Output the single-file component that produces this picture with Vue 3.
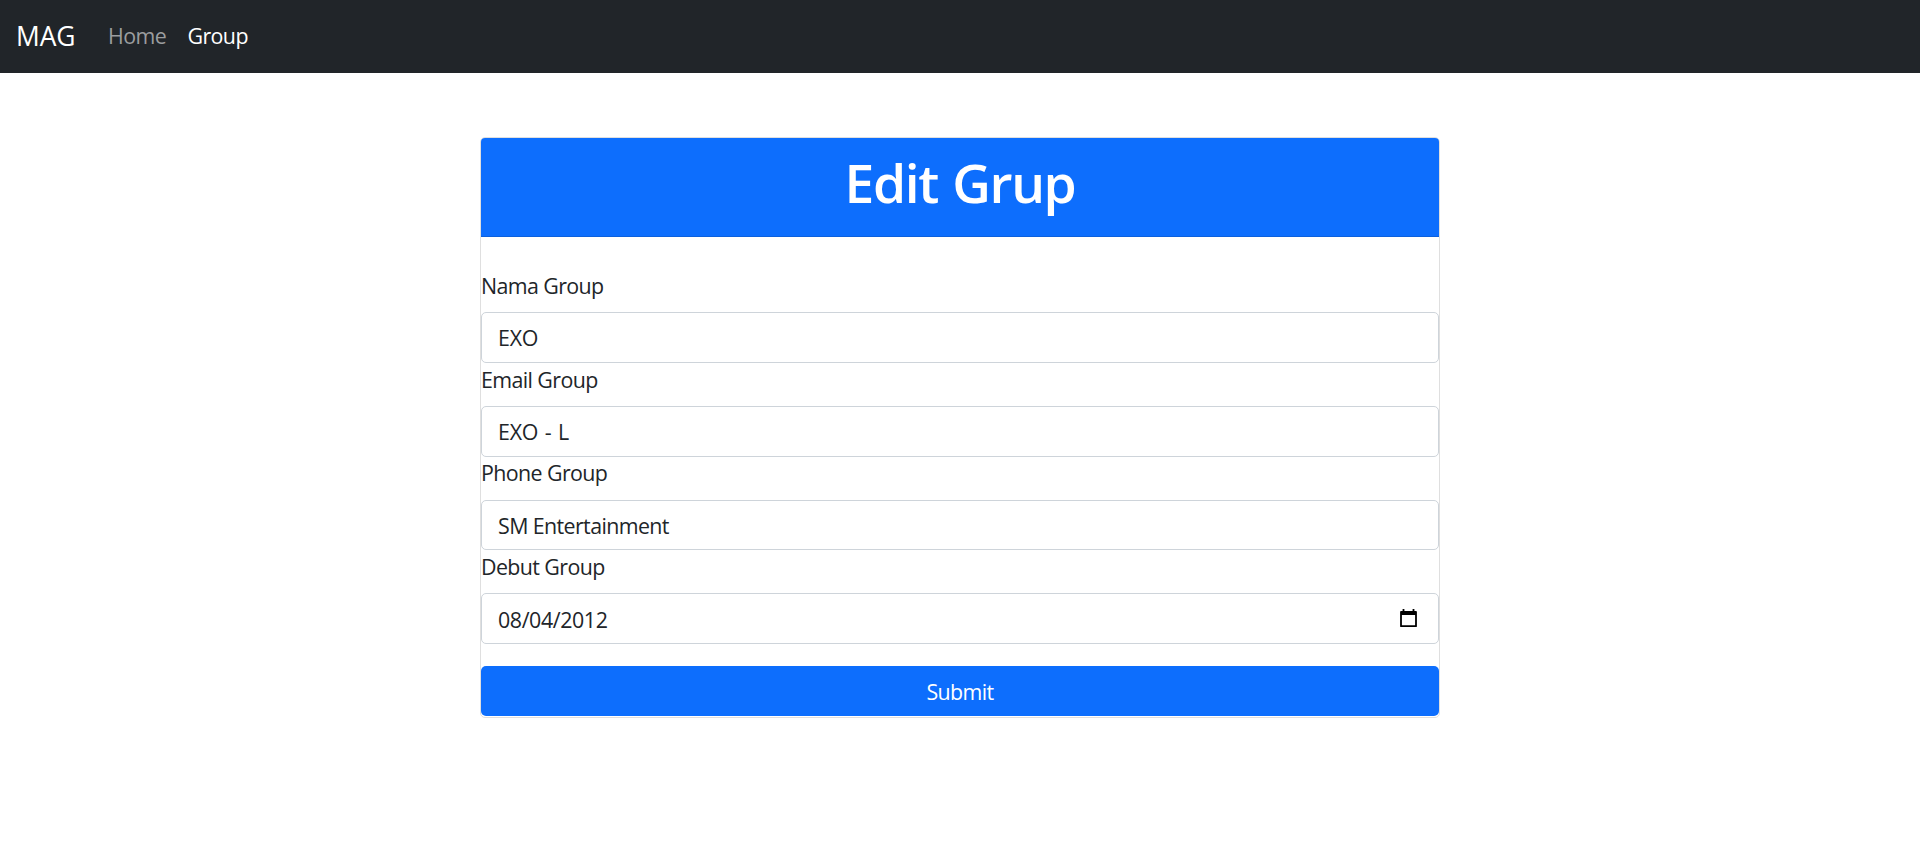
<script setup>
import { ref } from 'vue'

const fields = ref([
  { id: 'nama', label: 'Nama Group', value: 'EXO' },
  { id: 'email', label: 'Email Group', value: 'EXO - L' },
  { id: 'phone', label: 'Phone Group', value: 'SM Entertainment' },
  { id: 'debut', label: 'Debut Group', value: '08/04/2012', date: true },
])
</script>

<template>
  <nav class="navbar">
    <a class="brand">MAG</a>
    <a class="link home">Home</a>
    <a class="link active">Group</a>
  </nav>
  <main class="card">
    <header class="card-header"><h1>Edit Grup</h1></header>
    <form @submit.prevent>
      <div v-for="f in fields" :key="f.id" class="field">
        <label :for="f.id" :class="f.id">{{ f.label }}</label>
        <div class="control">
          <input :id="f.id" v-model="f.value" :class="f.id" type="text" spellcheck="false" />
          <svg v-if="f.date" class="calendar" width="17" height="19" viewBox="0 0 17 19">
            <path d="M1 3h15v14.2H1z" fill="none" stroke="#000" stroke-width="1.8" stroke-linejoin="round" />
            <path d="M1 2h15v4H1zM2.6 0h1.8v3H2.6zM12.6 0h1.8v3h-1.8z" fill="#000" />
          </svg>
        </div>
      </div>
      <button type="submit">Submit</button>
    </form>
  </main>
</template>

<style>
body {
  background: #fff;
}
</style>

<style scoped>
.navbar,
.card,
input,
button {
  font-family: "Open Sans", "Noto Sans", sans-serif;
  font-size: 21.4px;
  color: #212529;
  box-sizing: border-box;
}
.navbar {
  height: 73px;
  padding: 0 0 2px 16px;
  background: #212529;
  display: flex;
  align-items: center;
  line-height: 32px;
}
.brand {
  width: 92px;
  font-size: 26.4px;
  letter-spacing: -0.1px;
  color: #fff;
}
.link {
  letter-spacing: -0.6px;
}
.home {
  width: 79.5px;
  color: #9b9d9f;
}
.active {
  color: #fff;
}
.card {
  width: 960px;
  height: 581px;
  margin: 64px auto 0;
  border: 1px solid #dfdfdf;
  border-radius: 5px;
}
.card-header {
  height: 99px;
  box-sizing: border-box;
  background: #0d6efd;
  border-bottom: 1px solid #0c60dc;
  border-radius: 4px 4px 0 0;
  text-align: center;
}
h1 {
  margin: 0;
  font-size: 53.3px;
  line-height: 90px;
  font-weight: 600;
  letter-spacing: -1.4px;
  word-spacing: 2px;
  color: #fff;
}
form {
  padding-top: 32.5px;
}
.field {
  height: 93.8px;
}
label {
  display: block;
  height: 32px;
  line-height: 32.6px;
  margin-bottom: 10.5px;
  letter-spacing: -0.6px;
}
label.email {
  line-height: 34px;
}
.control {
  position: relative;
}
input {
  display: block;
  width: 100%;
  height: 50.8px;
  padding: 0 16px;
  border: 1px solid #ced4da;
  border-radius: 5px;
  background: #fff;
  letter-spacing: -0.6px;
  outline: 0;
}
input.nama {
  letter-spacing: -0.2px;
}
input.email {
  letter-spacing: -0.2px;
  word-spacing: 1.2px;
}
input.phone {
  padding-top: 1.5px;
}
input.debut {
  padding-top: 2px;
  letter-spacing: -0.4px;
}
.calendar {
  position: absolute;
  right: 22px;
  top: 16px;
}
button {
  display: block;
  width: 100%;
  height: 50px;
  margin-top: 21px;
  padding: 2px 0 0;
  border: 0;
  border-radius: 5px;
  background: #0d6efd;
  color: #fff;
  letter-spacing: -0.6px;
}
</style>
